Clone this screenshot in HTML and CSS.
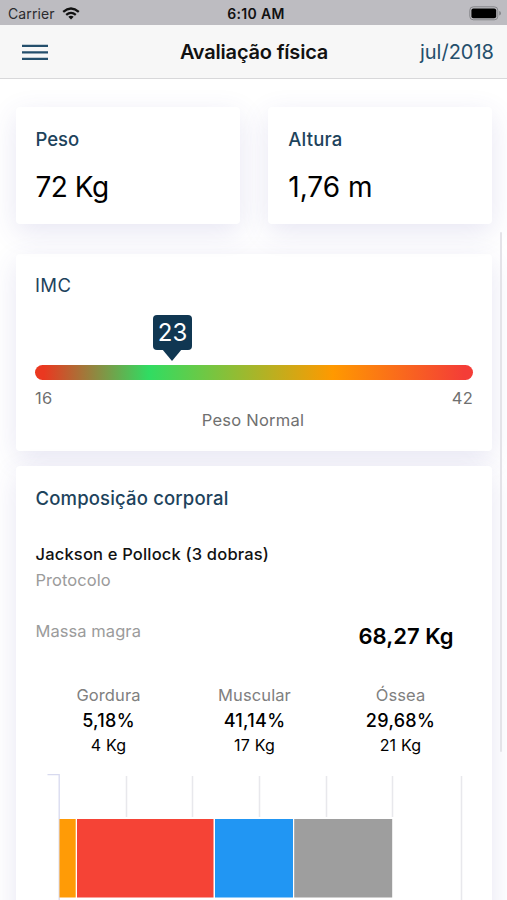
FILE: index.html
```html
<!DOCTYPE html>
<html lang="pt-BR">
<head>
<meta charset="utf-8">
<title>Avaliação física</title>
<link rel="stylesheet" href="styles.css">
</head>
<body>
<div class="status">
  <div class="carrier"><span>Carrier</span>
    <svg class="wifi" width="18" height="13" viewBox="0 0 18 13"><g fill="none" stroke="#111" stroke-width="2.3"><path d="M1.2 4.8Q9-1.8 16.8 4.8"/><path d="M4.2 7.9Q9 3.9 13.8 7.9"/></g><path fill="#111" d="M6.3 9.8Q9 7.9 11.7 9.8L9 12.5Z"/></svg>
  </div>
  <div class="clock">6:10 AM</div>
  <svg class="battery" width="33" height="15" viewBox="0 0 33 15"><rect x=".8" y=".8" width="28" height="13" rx="3.5" fill="none" stroke="#858589"/><rect x="2.4" y="2.4" width="24.8" height="9.8" rx="2" fill="#000"/><path d="M30.2 5Q32 5.6 32 7.3T30.2 9.6Z" fill="#858589"/></svg>
</div>
<header class="nav">
  <svg class="menu" width="26" height="17" viewBox="0 0 26 17"><path d="M0 1.8h26M0 8.4h26M0 14.9h26" stroke="#244f6c" stroke-width="2.3"/></svg>
  <h1>Avaliação física</h1>
  <span class="period">jul/2018</span>
</header>
<main>
  <div class="pair">
    <section class="card stat"><h2>Peso</h2><p class="weight">72 Kg</p></section>
    <section class="card stat"><h2 class="height-title">Altura</h2><p>1,76 m</p></section>
  </div>
  <section class="card imc">
    <h2 class="imc-title">IMC</h2>
    <div class="scale"><div class="marker">23</div></div>
    <div class="range"><span>16</span><span>42</span></div>
    <p class="verdict">Peso Normal</p>
  </section>
  <section class="card comp">
    <h2 class="comp-title">Composição corporal</h2>
    <p class="method">Jackson e Pollock (3 dobras)</p>
    <p class="label protocol">Protocolo</p>
    <div class="lean"><span class="label">Massa magra</span><strong>68,27 Kg</strong></div>
    <div class="parts">
      <div><span class="name">Gordura</span><b>5,18%</b><span class="mass">4 Kg</span></div>
      <div><span class="name">Muscular</span><b>41,14%</b><span class="mass">17 Kg</span></div>
      <div><span class="name">Óssea</span><b>29,68%</b><span class="mass">21 Kg</span></div>
    </div>
    <svg class="chart" width="438" height="126" viewBox="0 0 438 126">
      <path d="M91.5 2v41M157.5 2v41M224.5 2v41M291.5 2v41M357.5 2v41M426.5 2v124" stroke="#e8e8ec" stroke-width="1.5"/>
      <path d="M12.5 .5H24.2V126" fill="none" stroke="#d8daef" stroke-width="1.3"/>
      <rect x="24.5" y="45" width="16.2" height="78.5" fill="#ff9b06"/>
      <rect x="42" y="45" width="136.5" height="78.5" fill="#f54336"/>
      <rect x="180" y="45" width="78" height="78.5" fill="#2196f3"/>
      <rect x="259.2" y="45" width="98" height="78.5" fill="#9e9e9e"/>
    </svg>
  </section>
</main>
<div class="scrollbar"></div>
</body>
</html>
```
FILE: styles.css
```css
* { box-sizing: border-box; margin: 0; padding: 0; }
body { height: 900px; overflow: hidden; background: #fff; font-family: Inter, "Liberation Sans", sans-serif; color: #000; position: relative; }
svg { display: block; }

.status { height: 25px; background: #bdbcc1; display: grid; grid-template-columns: 1fr auto 1fr; align-items: center; padding: 3px 5px 0 8px; line-height: 22px; }
.carrier { display: flex; align-items: center; gap: 7px; font-size: 14px; color: #2b2b2e; letter-spacing: .1px; }
.wifi { margin-top: -2px; }
.clock { font-size: 14px; font-weight: 600; color: #111; letter-spacing: .35px; margin-left: 2px; }
.battery { justify-self: end; margin-top: -2px; }

.nav { height: 54px; background: #f7f7f7; border-bottom: 1px solid #d8d8da; display: grid; grid-template-columns: 1fr auto 1fr; align-items: center; padding: 1px 13px 0 22px; line-height: 52px; }
.nav h1 { font-size: 20px; font-weight: 600; color: #111; letter-spacing: -.2px; margin: 0 8px 0 0; }
.period { justify-self: end; font-size: 20px; color: #244f6c; }

main { padding: 28px 15px 0 16px; }
.card { background: #fff; border-radius: 4px; box-shadow: 0 8px 28px rgba(70, 60, 160, .13); padding: 0 19px 0 19.5px; }
h2 { font-size: 18.5px; line-height: 24px; font-weight: 500; color: #1d435c; }
.pair { display: grid; grid-template-columns: 1fr 1fr; gap: 28.5px; }
.stat { height: 117px; padding-top: 20px; }
.stat p { font-size: 28px; line-height: 36px; margin-top: 18px; }
.stat .weight { letter-spacing: -.5px; }
.height-title { letter-spacing: .2px; }
.stat:last-child { padding-left: 20px; }

.imc { height: 197px; margin-top: 30px; padding-top: 19px; padding-left: 19px; }
.imc-title { font-weight: 400; letter-spacing: .4px; }
.scale { position: relative; height: 15px; margin-top: 68px; border-radius: 8px; background: linear-gradient(90deg, #ea3820 2%, #30dc62 26%, #ff9900 68%, #f43d37 98%); }
.marker { position: absolute; left: 118px; top: -50px; width: 39px; height: 35px; border-radius: 4px; background: #103752; color: #fff; font-size: 24px; line-height: 35px; text-align: center; }
.marker::after { content: ""; position: absolute; left: 9px; top: 34px; border: 10.5px solid transparent; border-top: 12px solid #103752; border-bottom: 0; }
.range { display: flex; justify-content: space-between; font-size: 16.5px; line-height: 22px; margin-top: 6.5px; color: #707070; letter-spacing: .3px; }
.verdict { text-align: center; font-size: 16.5px; line-height: 22px; color: #707070; letter-spacing: .25px; padding-right: 2px; }

.comp { height: 460px; margin-top: 15px; padding-top: 20px; padding-left: 19.5px; padding-right: 18.5px; }
.comp-title { letter-spacing: .16px; }
.method { font-size: 16.5px; font-weight: 500; line-height: 22px; margin-top: 33px; color: #111; letter-spacing: .18px; }
.label { font-size: 16.5px; line-height: 22px; color: #9b9b9b; letter-spacing: .06px; }
.protocol { margin-top: 4px; }
.lean { display: flex; justify-content: space-between; margin-top: 29px; padding-right: 20px; }
.lean strong { font-size: 22px; line-height: 28px; font-weight: 600; padding-top: 2px; }
.parts { display: grid; grid-template-columns: repeat(3, 1fr); text-align: center; margin-top: 34px; }
.parts > div { display: flex; flex-direction: column; }
.name { font-size: 16.5px; line-height: 23px; color: #808080; letter-spacing: .1px; }
.parts b { font-size: 18px; line-height: 28px; font-weight: 500; letter-spacing: .3px; }
.mass { font-size: 16px; line-height: 20px; letter-spacing: .2px; }
.chart { margin-top: 19px; margin-left: -.5px; }

.scrollbar { position: absolute; left: 500px; top: 232px; width: 2px; height: 520px; border-radius: 1px; background: #e4e3e8; }
```
